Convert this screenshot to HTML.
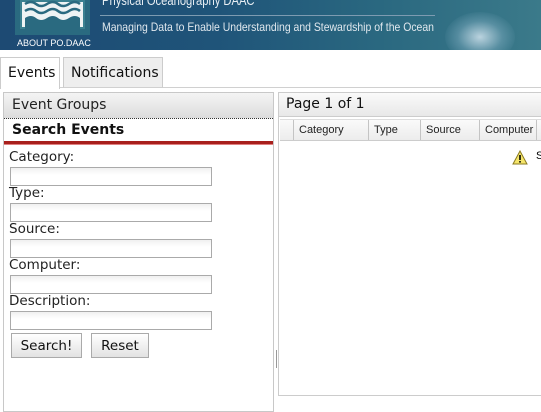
<!DOCTYPE html>
<html><head><style>
*{margin:0;padding:0;box-sizing:border-box}
body{width:541px;height:400px;overflow:hidden;background:#fff;font-family:"DejaVu Sans",sans-serif;position:relative}
.hdr{position:absolute;left:0;top:0;width:541px;height:50px;background:linear-gradient(90deg,#1d4a73 0%,#1f5479 40%,#2a6880 70%,#3b7a8a 100%);overflow:hidden}
.glow{position:absolute;left:445px;top:12px;width:70px;height:50px;border-radius:50%;background:radial-gradient(ellipse at center,rgba(220,235,245,.8) 0%,rgba(150,190,210,.35) 45%,rgba(0,0,0,0) 75%)}
.logo{position:absolute;left:15px;top:0;width:75px;height:35px;background:#2a6a80}
.logo .in{position:absolute;left:5px;top:0;width:65px;height:29px;background:#eef3f4;border:2px solid #3a8090}
.logo svg{position:absolute;left:6px;top:0}
.about{position:absolute;left:17px;top:38px;font:9px "Liberation Sans",sans-serif;color:#fff}
.t1{position:absolute;left:102px;top:-8px;font:14px "Liberation Sans",sans-serif;color:#e8eef3;transform:scaleX(.8);transform-origin:0 0;white-space:nowrap}
.ln{position:absolute;left:100px;top:15px;width:335px;height:1px;background:#7d9bb1}
.t2{position:absolute;left:102px;top:20px;font:12px "Liberation Sans",sans-serif;color:#e0e8ee;transform:scaleX(.87);transform-origin:0 0;white-space:nowrap}
.tab{position:absolute;top:57px;height:31px;border:1px solid #ccc;border-bottom:none;font-size:14px;padding:7px 0 0 7px;color:#111}
.tabline{position:absolute;left:0;top:87px;width:541px;height:1px;background:#d0d0d0}
.lp{position:absolute;left:3px;top:92px;width:271px;height:320px;border:1px solid #c8c8c8}
.eg{height:26px;background:linear-gradient(#f4f4f4,#dcdcdc);border-bottom:1px dotted #333;font-size:14px;padding:4px 0 0 8px;color:#222}
.se{height:22px;font-size:14px;font-weight:bold;padding:3px 0 0 8px;color:#111}
.red{height:4px;background:#a8201c;border-bottom:1px solid #e08080}
.lab{position:absolute;left:9px;font-size:13.5px;color:#222}
.inp{position:absolute;left:10px;width:202px;height:19px;border:1px solid #aaa;background:linear-gradient(#f0f0f0,#fff 40%)}
.btn{position:absolute;top:333px;height:25px;border:1px solid #aaa;background:linear-gradient(#fff,#e2e2e2);font-size:13.5px;text-align:center;padding-top:4px;color:#111}
.rp{position:absolute;left:278px;top:92px;width:270px;height:304px;border:1px solid #ccc}
.ph{height:24px;background:linear-gradient(#fafafa,#e8e8e8);border-bottom:1px solid #ccc;font-size:14px;padding:3px 0 0 7px;color:#111}
.gh{position:absolute;left:1px;top:26px;height:22px;width:270px;background:#ededed;border-top:1px solid #ddd;border-bottom:1px solid #ccc;font:11px "Liberation Sans",sans-serif;color:#222}
.gh div{position:absolute;top:0;height:20px;border-left:1px solid #c4c4c4;padding:4px 0 0 5px;background:linear-gradient(#fafafa,#ececec)}
</style></head><body>
<div class="hdr">
<div class="glow"></div>
<div class="logo"><div class="in"></div>
<svg width="63" height="29" viewBox="0 0 63 29"><g fill="none" stroke="#2a6a80" stroke-width="2.5"><path d="M4 4q6-4 11 0t11 0t11 0t11 0t11 0"/><path d="M4 11q6-4 11 0t11 0t11 0t11 0t11 0"/></g><path d="M4 18q6-4 11 0t11 0t11 0t11 0t11 0V29H4z" fill="#2a6a80"/></svg></div>
<div class="about">ABOUT PO.DAAC</div>
<div class="t1">Physical Oceanography DAAC</div>
<div class="ln"></div>
<div class="t2">Managing Data to Enable Understanding and Stewardship of the Ocean</div>
</div>
<div class="tabline"></div>
<div class="tab" style="left:0;width:60px;background:#fff;height:32px">Events</div>
<div class="tab" style="left:63px;width:100px;background:#eee;border-bottom:1px solid #d0d0d0">Notifications</div>
<div class="lp"><div class="eg">Event Groups</div><div class="se">Search Events</div><div class="red"></div></div>
<div class="lab" style="top:149px">Category:</div><div class="inp" style="top:167px"></div>
<div class="lab" style="top:185px">Type:</div><div class="inp" style="top:203px"></div>
<div class="lab" style="top:221px">Source:</div><div class="inp" style="top:239px"></div>
<div class="lab" style="top:257px">Computer:</div><div class="inp" style="top:275px"></div>
<div class="lab" style="top:293px">Description:</div><div class="inp" style="top:311px"></div>
<div class="btn" style="left:11px;width:71px">Search!</div>
<div class="btn" style="left:91px;width:58px">Reset</div>
<div style="position:absolute;left:276px;top:350px;width:1px;height:18px;background:#999"></div>
<div class="rp"><div class="ph">Page 1 of 1</div>
<div class="gh"><div style="left:0;width:13px;border-left:none"></div><div style="left:13px;width:75px">Category</div><div style="left:88px;width:52px">Type</div><div style="left:140px;width:59px">Source</div><div style="left:199px;width:57px">Computer</div><div style="left:256px;width:20px"></div></div>
</div>
<svg style="position:absolute;left:512px;top:150px" width="16" height="15" viewBox="0 0 16 15"><path d="M8 1L15 14H1z" fill="#f5e56a" stroke="#8a7a20"/><rect x="7.2" y="5" width="1.6" height="5" fill="#000"/><rect x="7.2" y="11" width="1.6" height="1.6" fill="#000"/></svg>
<div style="position:absolute;left:536px;top:150px;font:11px 'Liberation Sans',sans-serif">S</div>
</body></html>
